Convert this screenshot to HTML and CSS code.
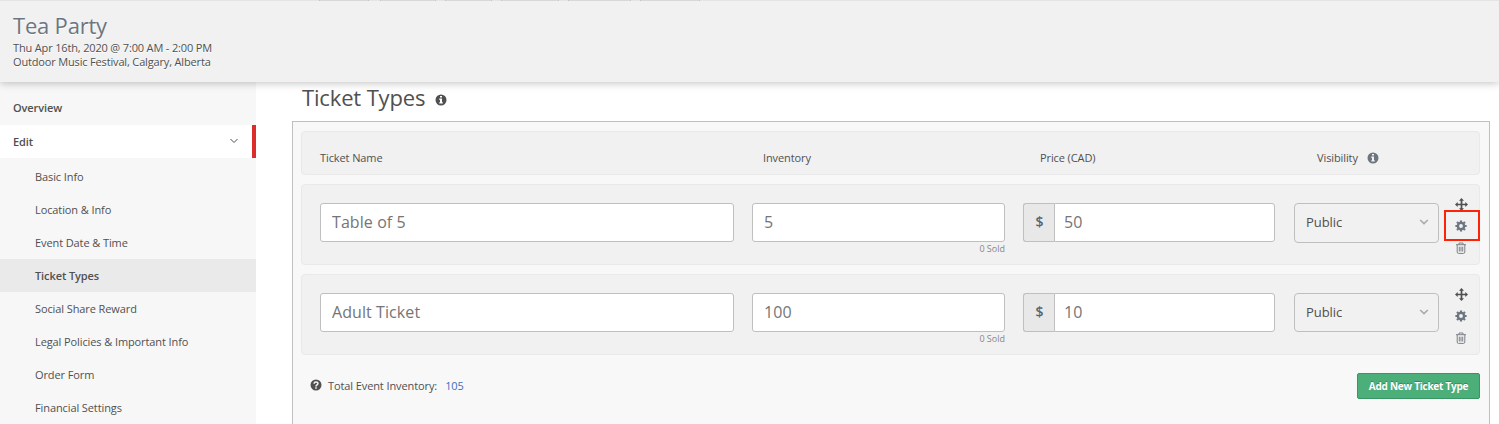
FILE: index.html
```html
<!DOCTYPE html>
<html lang="en">
  <head>
    <meta charset="UTF-8" />
    <meta name="viewport" content="width=device-width, initial-scale=1.0" />
    <title>Tea Party - Ticket Types</title>
    <link rel="stylesheet" href="styles.css">
  </head>
  <body>
    <svg class="sprite" aria-hidden="true">
      <symbol id="icon-info" viewBox="0 0 12 12">
        <path fill-rule="evenodd" d="M6 .5a5.5 5.5 0 1 0 0 11a5.5 5.5 0 1 0 0-11zM5 2h2v1.6H5zM4.3 4.6H7v3.6h.8v1.4H4.3V8.2H5V6h-.7z" />
      </symbol>
      <symbol id="icon-question" viewBox="0 0 12 12">
        <path d="M6 .5a5.5 5.5 0 1 0 0 11a5.5 5.5 0 1 0 0-11z" />
        <path d="M4.1 4.7C4.2 2.4 8 2.5 7.9 4.7C7.8 5.9 6 5.8 6 7.4M6 8.2v1.5" fill="none" stroke="#f8f8f8" stroke-width="1.5" />
      </symbol>
      <symbol id="icon-down" viewBox="0 0 10 6">
        <path d="M1.5 1L5 4.5L8.5 1" fill="none" stroke="currentColor" />
      </symbol>
      <symbol id="icon-down-bold" viewBox="0 0 10 6">
        <path d="M1.2 1L5 4.6L8.8 1" fill="none" stroke="currentColor" stroke-width="1.6" />
      </symbol>
      <symbol id="icon-move" viewBox="0 0 12 12">
        <path d="M6 0l2.3 2.5H6.8v2.7h2.7V3.7L12 6L9.5 8.3V6.8H6.8v2.7h1.5L6 12L3.7 9.5h1.5V6.8H2.5v1.5L0 6l2.5-2.3v1.5h2.7V2.5H3.7z" />
      </symbol>
      <symbol id="icon-gear" viewBox="0 0 12 12">
        <circle cx="6" cy="6" r="3.1" fill="none" stroke="currentColor" stroke-width="2.4" />
        <path d="M6 .4v1.8M6 9.8v1.800M.4 6h1.800M9.800 6h1.800M2 2l1.300 1.300M8.700 8.700L10 10M2 10l1.300-1.300M8.700 3.300L10 2" fill="none" stroke="currentColor" stroke-width="2.200" />
      </symbol>
      <symbol id="icon-trash" viewBox="0 0 12 12">
        <path d="M1 2.7h10M4 2.5V1h4v1.5M2.2 2.7v7.3q0 1.4 1.3 1.4h5q1.3 0 1.3-1.4V2.7M4.3 4.700v4.800M6 4.700v4.800M7.700 4.700v4.800" fill="none" stroke="currentColor" />
      </symbol>
    </svg>

    <header class="event-header">
      <div class="tabs-edge">
        <span class="edge edge-1"></span>
        <span class="edge edge-2"></span>
        <span class="edge edge-3"></span>
        <span class="edge edge-4"></span>
        <span class="edge edge-5"></span>
        <span class="edge edge-6"></span>
      </div>
      <h1>Tea Party</h1>
      <p>Thu Apr 16th, 2020 @ 7:00 AM - 2:00 PM</p>
      <p>Outdoor Music Festival, Calgary, Alberta</p>
    </header>

    <div class="page">
      <nav class="sidebar">
        <a class="section">Overview</a>
        <a class="section open">Edit <svg class="chevron"><use href="#icon-down" /></svg></a>
        <ul>
          <li>Basic Info</li>
          <li>Location &amp; Info</li>
          <li>Event Date &amp; Time</li>
          <li class="active">Ticket Types</li>
          <li>Social Share Reward</li>
          <li>Legal Policies &amp; Important Info</li>
          <li>Order Form</li>
          <li>Financial Settings</li>
        </ul>
      </nav>

      <main>
        <h2>Ticket Types <svg class="icon"><use href="#icon-info" /></svg></h2>

        <div class="panel">
          <div class="row labels">
            <span>Ticket Name</span>
            <span>Inventory</span>
            <span>Price (CAD)</span>
            <span>Visibility <svg class="icon slate"><use href="#icon-info" /></svg></span>
          </div>

          <div class="row ticket">
            <input type="text" value="Table of 5" />
            <div class="inventory">
              <input type="text" value="5" />
              <small>0 Sold</small>
            </div>
            <div class="price">
              <span>$</span>
              <input type="text" value="50" />
            </div>
            <div class="select tall">Public <svg class="chevron"><use href="#icon-down-bold" /></svg></div>
            <div class="actions">
              <svg class="move"><use href="#icon-move" /></svg>
              <span class="settings highlight"><svg><use href="#icon-gear" /></svg></span>
              <svg class="trash"><use href="#icon-trash" /></svg>
            </div>
          </div>

          <div class="row ticket">
            <input type="text" value="Adult Ticket" />
            <div class="inventory">
              <input type="text" value="100" />
              <small>0 Sold</small>
            </div>
            <div class="price">
              <span>$</span>
              <input type="text" value="10" />
            </div>
            <div class="select">Public <svg class="chevron"><use href="#icon-down-bold" /></svg></div>
            <div class="actions">
              <svg class="move"><use href="#icon-move" /></svg>
              <span class="settings"><svg><use href="#icon-gear" /></svg></span>
              <svg class="trash"><use href="#icon-trash" /></svg>
            </div>
          </div>

          <div class="footer">
            <svg class="icon"><use href="#icon-question" /></svg>
            <span class="total">Total Event Inventory:</span>
            <a>105</a>
            <button>Add New Ticket Type</button>
          </div>
        </div>
      </main>
    </div>
  </body>
</html>
```

FILE: styles.css
```css
* {
  box-sizing: border-box;
}

body {
  margin: 0;
  height: 424px;
  overflow: hidden;
  font-family: "Open Sans", "Noto Sans", sans-serif;
  font-size: 11px;
  letter-spacing: -0.1px;
  color: #505050;
  background: #fff;
}

.sprite {
  display: none;
}

svg {
  fill: currentColor;
}

.icon {
  width: 12px;
  height: 12px;
}

.chevron {
  width: 10px;
  height: 6px;
}

.event-header {
  position: relative;
  height: 82px;
  padding-left: 13px;
  background: #f1f1f1;
  box-shadow: 0 1px 8px rgba(0, 0, 0, 0.25);
  text-shadow: 0 1px 0 #fff;
}

.tabs-edge {
  display: flex;
  gap: 9px;
  height: 1px;
  margin-left: -13px;
  padding-left: 319px;
  background: #e4e4e4;
}

.edge {
  background: #d8d8d8;
  border: solid #c4c4c4;
  border-width: 0 1px;
}

.edge-1 { width: 50px; margin-right: 2px; }
.edge-2 { width: 56px; }
.edge-3 { width: 47px; }
.edge-4 { width: 58px; }
.edge-5 { width: 63px; }
.edge-6 { width: 60px; }

h1 {
  margin: 0;
  padding-top: 9px;
  font-size: 22px;
  line-height: 31px;
  font-weight: 400;
  letter-spacing: -0.2px;
  color: #6c7580;
}

.event-header p {
  margin: 0;
  line-height: 14px;
  letter-spacing: -0.16px;
}

.page {
  display: flex;
  height: 342px;
}

.sidebar {
  flex: 0 0 256px;
  padding-top: 10px;
  background: #f7f7f7;
}

.section {
  display: flex;
  align-items: center;
  justify-content: space-between;
  height: 33px;
  padding: 0 17px 2px 13px;
  font-weight: 600;
}

.section.open {
  padding: 0 13px 0 13px;
  background: #fff;
  border-right: 4px solid #dc2d2d;
}

.section .chevron {
  margin-bottom: 2px;
}

.sidebar ul {
  list-style: none;
  margin: 2px 0 0;
  padding: 0;
}

.sidebar li {
  height: 33px;
  padding-left: 35px;
  line-height: 33px;
}

.sidebar .active {
  background: #eaeaea;
  font-weight: 600;
}

main {
  flex: 1;
  padding: 0 9px 0 36px;
}

h2 {
  display: flex;
  align-items: center;
  gap: 10px;
  height: 39px;
  margin: 0;
  padding: 0 0 10px 10px;
  font-size: 22px;
  font-weight: 400;
  letter-spacing: -0.15px;
}

h2 .icon {
  margin-top: 6px;
}

.panel {
  height: 320px;
  padding: 9px 9px 0 8px;
  background: #f8f8f8;
  border: 1px solid #bfbfbf;
}

.row {
  display: grid;
  grid-template-columns: 414px 253px 252px 145px 23px;
  column-gap: 18px;
  margin-bottom: 9px;
  padding-left: 18px;
  background: #f1f1f1;
  border: 1px solid #e9e9e9;
  border-radius: 4px;
}

.labels {
  height: 44px;
  padding-top: 18px;
  line-height: 16px;
}

.labels span {
  height: 16px;
}

.labels span + span {
  padding-left: 11px;
}

.labels span:nth-child(3) {
  padding-left: 17px;
}

.labels span:nth-child(4) {
  display: flex;
  gap: 9px;
  align-items: center;
  padding-left: 24px;
}

.slate {
  color: #6c7580;
}

.ticket {
  height: 81px;
  padding-top: 18px;
}

input {
  width: 100%;
  height: 39px;
  padding: 0 11px 2px;
  font: 16px "Open Sans", "Noto Sans", sans-serif;
  letter-spacing: 0.08px;
  color: #757575;
  background: #fff;
  border: 1px solid #bfbfbf;
  border-radius: 3px;
}

.inventory small {
  display: block;
  font-size: 9px;
  line-height: 14px;
  letter-spacing: 0;
  text-align: right;
  color: #888;
}

.price {
  display: flex;
  height: 39px;
}

.price span {
  flex: 0 0 31px;
  padding-left: 1px;
  font-size: 14px;
  font-weight: 600;
  line-height: 36px;
  text-align: center;
  color: #596270;
  background: #e8e8e8;
  border: 1px solid #bfbfbf;
  border-right: 0;
  border-radius: 3px 0 0 3px;
}

.price input {
  padding-left: 9px;
  border-radius: 0 3px 3px 0;
}

.select {
  display: flex;
  align-items: center;
  justify-content: space-between;
  width: 145px;
  height: 39px;
  margin-left: 1px;
  padding: 0 9px 1px 11px;
  font-size: 13px;
  letter-spacing: -0.05px;
  border: 1px solid #bfbfbf;
  border-radius: 4px;
}

.select.tall {
  height: 40px;
  padding-bottom: 2px;
}

.select .chevron {
  color: #aaa;
}

.actions {
  display: flex;
  flex-direction: column;
  align-items: center;
  margin: -5px 0 0 -13px;
  width: 36px;
}

.actions svg {
  display: block;
  flex: none;
  width: 12px;
  height: 12px;
}

.actions .move {
  width: 13px;
  height: 13px;
  margin-bottom: -1px;
}

.settings {
  display: flex;
  flex: none;
  align-items: center;
  justify-content: center;
  width: 36px;
  height: 31px;
  padding-top: 1px;
  color: #6c7580;
}

.settings.highlight {
  margin-right: -2px;
  padding-right: 2px;
  border: 2px solid #fb2408;
}

.actions .trash {
  margin-top: 1px;
  color: #7c8088;
}

.footer {
  display: flex;
  align-items: center;
  padding: 9px 0 0 9px;
}

.total {
  margin: 0 8px 0 6px;
}

.footer .icon,
.footer .total,
.footer a {
  margin-bottom: 2px;
}

.footer a {
  color: #3c6fb8;
}

button {
  width: 123px;
  height: 26px;
  margin-left: auto;
  padding: 0;
  font: 700 10px "Open Sans", "Noto Sans", sans-serif;
  letter-spacing: -0.25px;
  color: #fff;
  text-shadow: 0 -1px 0 rgba(0, 0, 0, 0.25);
  background: #4caf7a;
  border: 1px solid #3a9564;
  border-radius: 2px;
}
```
